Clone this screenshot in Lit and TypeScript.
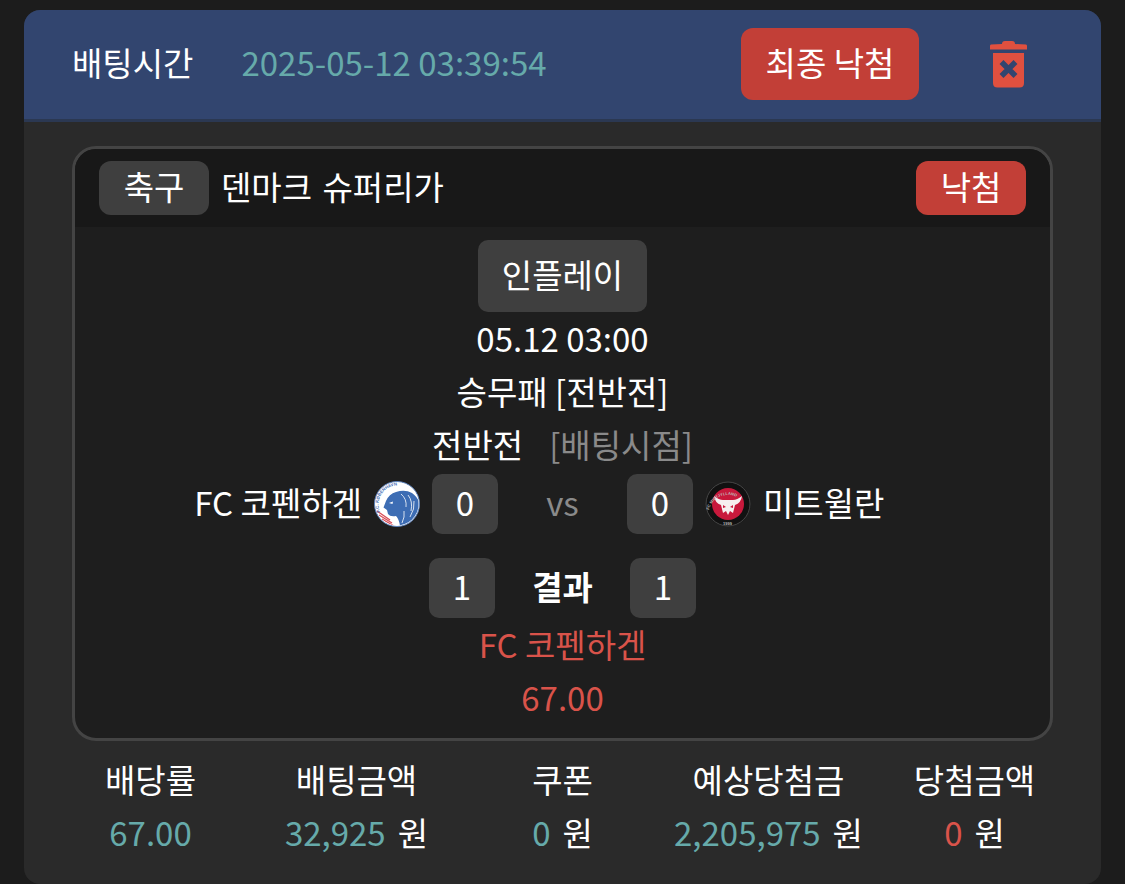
import { LitElement, html, css, svg } from "lit";
import { customElement } from "lit/decorators.js";

const trash = svg`<svg class="trash" viewBox="0 0 37 48" width="37" height="48">
  <path fill="#e0503f" d="M12 4 Q12 1 15 1 H22 Q25 1 25 4 L36 4.500 Q37 4.500 37 6 V9.500 H0 V6 Q0 4.500 1 4.500 Z"/>
  <path fill="#e0503f" d="M3 13 H34 V43 Q34 47.500 29.500 47.500 H7.500 Q3 47.500 3 43 Z"/>
  <path fill="none" stroke="#32456f" stroke-width="5.500" d="M11.500 22 L25.500 36 M25.500 22 L11.500 36"/>
</svg>`;

const lion = svg`<svg viewBox="0 0 46 46" width="46" height="46" class="logo">
  <defs>
    <path id="arcA" d="M6 31 A19 19 0 0 1 41 16"/>
    <clipPath id="disc"><circle cx="23" cy="23" r="21.500"/></clipPath>
  </defs>
  <circle cx="23" cy="23" r="22.500" fill="#fff" stroke="#5a80bb" stroke-width="1"/>
  <g clip-path="url(#disc)">
    <path fill="#3d6db4" d="M12 20 Q15 13 22 11 Q31 8 38 12 Q46 18 46 26 Q44 38 30 46 L26 45 Q25 38 22 35 Q16 36 14 33 L13 29 L9.500 26.500 Z"/>
    <path fill="none" stroke="#fff" stroke-width=".8" d="M27 13 Q33 18 32 26 M34 14 Q39 20 37 30 M40 20 Q41 28 36 36 M30 30 Q31 36 28 42"/>
    <path fill="#fff" d="M15 22 L19 20.500 L18.500 23 Z"/>
    <path fill="none" stroke="#d8505a" stroke-width="1.400" d="M3 30 L16 39 M5 34 L18 42 M8 38 L20 45"/>
  </g>
  <text font-family="Liberation Sans, sans-serif" font-size="4.400" font-weight="700" fill="#3d6db4"><textPath href="#arcA">F.C. KØBENHAVN</textPath></text>
</svg>`;

const bull = svg`<svg viewBox="0 0 46 46" width="46" height="46" class="logo">
  <defs><path id="arcB" d="M4 29 A19.500 19.500 0 0 1 42 29"/></defs>
  <circle cx="23" cy="23" r="22.500" fill="#111"/>
  <circle cx="23" cy="23" r="22" fill="none" stroke="#555" stroke-width=".8"/>
  <circle cx="23" cy="23" r="16" fill="#c8193c"/>
  <path fill="#f6f0f0" d="M9 15 Q14 19 18 19 H28 Q32 19 37 15 Q36 22 30 24 L28 32 L25 30 L23 34 L21 30 L18 32 L16 24 Q10 22 9 15 Z"/>
  <path fill="#c8193c" d="M18 24 L21 26 L18 27 Z M28 24 L25 26 L28 27 Z"/>
  <text font-family="Liberation Sans, sans-serif" font-size="4" font-weight="700" fill="#bbb"><textPath href="#arcB">FC MIDTJYLLAND</textPath></text>
  <text font-family="Liberation Sans, sans-serif" font-size="4" font-weight="700" fill="#bbb" x="18" y="44">1999</text>
</svg>`;

@customElement("app-root")
export class AppRoot extends LitElement {
  static styles = css`
    :host {
      display: block;
      height: 884px;
      box-sizing: border-box;
      padding: 10px 24px 0;
      background: #1c1c1c;
      font-family: "Noto Sans CJK KR", "Noto Sans", sans-serif;
      font-size: 33px;
      font-weight: 400;
      color: #fff;
      overflow: hidden;
    }
    .card {
      height: 874px;
      background: #2a2a2a;
      border-radius: 16px;
      overflow: hidden;
    }
    .top {
      height: 112px;
      box-sizing: border-box;
      padding: 0 74px 1px 48px;
      background: #32456f;
      border-bottom: 3px solid #2b3852;
      display: flex;
      align-items: center;
    }
    .top > span { padding-bottom: 5px; }
    .date { margin-left: 48px; color: #66aaaa; }
    .final {
      margin-left: auto;
      width: 178px;
      height: 72px;
      box-sizing: border-box;
      padding-bottom: 4px;
      display: flex;
      align-items: center;
      justify-content: center;
      background: #c23f37;
      border-radius: 12px;
    }
    .trash { margin-left: 71px; display: block; }
    .box {
      margin: 24px 48px 0;
      height: 595px;
      box-sizing: border-box;
      border: 3px solid #444;
      border-radius: 24px;
      background: #1e1e1e;
      overflow: hidden;
    }
    .head {
      height: 78px;
      background: #181818;
      display: flex;
      align-items: center;
      padding: 0 24px;
    }
    .tag {
      height: 54px;
      box-sizing: border-box;
      padding-bottom: 4px;
      display: flex;
      align-items: center;
      justify-content: center;
      border-radius: 12px;
    }
    .sport { width: 110px; background: #3f3f3f; }
    .league { margin-left: 12px; padding-bottom: 4px; word-spacing: 3px; }
    .lost { margin-left: auto; width: 110px; background: #c23f37; }
    .body {
      display: flex;
      flex-direction: column;
      align-items: center;
      padding-top: 13px;
    }
    .inplay {
      width: 169px;
      height: 72px;
      box-sizing: border-box;
      padding-bottom: 4px;
      display: flex;
      align-items: center;
      justify-content: center;
      background: #3f3f3f;
      border-radius: 10px;
    }
    .line {
      height: 53px;
      box-sizing: border-box;
      padding-bottom: 3px;
      display: flex;
      align-items: center;
      justify-content: center;
      white-space: nowrap;
    }
    .first { margin-top: 1px; }
    .muted { color: #8a8a8a; margin-left: 26px; }
    .match {
      align-self: stretch;
      display: grid;
      grid-template-columns: 1fr 66px 129px 66px 1fr;
      height: 60px;
      margin-top: 2px;
      align-items: center;
    }
    .team { display: flex; align-items: center; gap: 12px; white-space: nowrap; }
    .team span { padding-bottom: 4px; }
    .team.l { justify-content: flex-end; margin-right: 12px; }
    .team.r { margin-left: 12px; }
    .logo { display: block; flex: none; }
    .num {
      height: 60px;
      box-sizing: border-box;
      padding-bottom: 4px;
      display: flex;
      align-items: center;
      justify-content: center;
      background: #3f3f3f;
      border-radius: 10px;
    }
    .vs { text-align: center; color: #8a8a8a; padding-bottom: 4px; }
    .result {
      display: grid;
      grid-template-columns: 66px 135px 66px;
      align-items: center;
      margin-top: 24px;
      height: 60px;
    }
    .rt { text-align: center; font-weight: 700; padding-bottom: 4px; }
    .red { color: #d9534a; }
    .line.red { padding-bottom: 5px; }
    .pick { margin-top: 2px; }
    .stats {
      display: grid;
      grid-template-columns: repeat(5, 206px);
      justify-content: center;
      margin-top: 12px;
      text-align: center;
    }
    .stat .lab, .stat .val {
      height: 55px;
      box-sizing: border-box;
      display: flex;
      align-items: center;
      justify-content: center;
      white-space: nowrap;
    }
    .stat .lab { padding-bottom: 4px; }
    .stat .val { padding-bottom: 8px; }
    .teal { color: #66aaaa; }
    .won { margin-left: 12px; }
  `;

  private stat(label: string, value: string, cls: string, won = true) {
    return html`<div class="stat">
      <div class="lab">${label}</div>
      <div class="val"><span class=${cls}>${value}</span>${won ? html`<span class="won">원</span>` : ""}</div>
    </div>`;
  }

  render() {
    return html`<div class="card">
      <div class="top">
        <span>배팅시간</span>
        <span class="date">2025-05-12 03:39:54</span>
        <div class="final">최종 낙첨</div>
        ${trash}
      </div>
      <div class="box">
        <div class="head">
          <div class="tag sport">축구</div>
          <span class="league">덴마크 슈퍼리가</span>
          <div class="tag lost">낙첨</div>
        </div>
        <div class="body">
          <div class="inplay">인플레이</div>
          <div class="line first">05.12 03:00</div>
          <div class="line">승무패 [전반전]</div>
          <div class="line"><span>전반전</span><span class="muted">[배팅시점]</span></div>
          <div class="match">
            <div class="team l"><span>FC 코펜하겐</span>${lion}</div>
            <div class="num">0</div>
            <div class="vs">vs</div>
            <div class="num">0</div>
            <div class="team r">${bull}<span>미트윌란</span></div>
          </div>
          <div class="result">
            <div class="num">1</div>
            <div class="rt">결과</div>
            <div class="num">1</div>
          </div>
          <div class="line red pick">FC 코펜하겐</div>
          <div class="line red">67.00</div>
        </div>
      </div>
      <div class="stats">
        ${this.stat("배당률", "67.00", "teal", false)}
        ${this.stat("배팅금액", "32,925", "teal")}
        ${this.stat("쿠폰", "0", "teal")}
        ${this.stat("예상당첨금", "2,205,975", "teal")}
        ${this.stat("당첨금액", "0", "red")}
      </div>
    </div>`;
  }
}
